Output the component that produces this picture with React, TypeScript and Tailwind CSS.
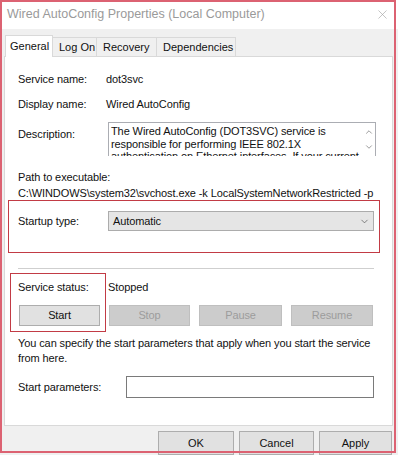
import { ChevronDown, ChevronUp, X } from "lucide-react";

const font = { fontFamily: '"Liberation Sans", Arial, sans-serif' };

function WinButton({ label, disabled, className = "" }: { label: string; disabled?: boolean; className?: string }) {
  return (
    <div
      className={`flex items-center justify-center border text-[11px] ${
        disabled
          ? "bg-[#cccccc] border-[#bfbfbf] text-[#9c9c9c]"
          : "bg-[#e1e1e1] border-[#adadad] text-[#111]"
      } ${className}`}
    >
      {label}
    </div>
  );
}

function Tab({ label, active, className = "" }: { label: string; active?: boolean; className?: string }) {
  return (
    <div
      className={`flex items-center border border-b-0 border-[#d9d9d9] text-[11px] text-[#111] ${
        active ? "bg-white h-[22px] relative z-10 -mb-px pl-[4px]" : "bg-[#f0f0f0] h-[19px] pl-[6px]"
      } ${className}`}
    >
      {label}
    </div>
  );
}

export default function App() {
  return (
    <div className="relative w-[398px] h-[455px] overflow-hidden bg-white text-[#111]" style={font}>
      {/* title bar */}
      <div className="h-[29px] flex items-center justify-between pl-[7px] pr-[8px] bg-white">
        <span className="text-[12.5px] text-[#9a9a9a]">Wired AutoConfig Properties (Local Computer)</span>
        <X className="w-[15px] h-[15px] text-[#a0a0a0]" strokeWidth={1} />
      </div>

      {/* body */}
      <div className="bg-[#f0f0f0] h-[426px] pl-[4px] pr-[5px] pt-[5px]">
        <div className="flex items-end pl-px h-[22px]">
          <Tab label="General" active className="w-[48px]" />
          <Tab label="Log On" className="w-[44px] border-l-0" />
          <Tab label="Recovery" className="w-[60px] border-l-0" />
          <Tab label="Dependencies" className="w-[79px] border-l-0" />
        </div>

        <div className="bg-white border border-[#d9d9d9] h-[370px] pl-[13px] pr-[16px] pt-[14px] text-[11px] tracking-[-0.1px]">
          <div className="flex items-center h-[16px]">
            <span className="w-[88px]">Service name:</span>
            <span>dot3svc</span>
          </div>
          <div className="flex items-center h-[16px] mt-[9px]">
            <span className="w-[88px]">Display name:</span>
            <span>Wired AutoConfig</span>
          </div>
          <div className="flex items-start h-[34px] mt-[10px]">
            <span className="w-[90px] pt-[4px] leading-[16px]">Description:</span>
            <div className="flex-1 h-[34px] border border-[#abadb3] border-b-0 flex overflow-hidden">
              <div className="flex-1 pl-[2px] pt-[2px] leading-[12.5px] overflow-hidden">
                The Wired AutoConfig (DOT3SVC) service is responsible for performing IEEE 802.1X
                authentication on Ethernet interfaces. If your current wired network deployment
                enforces 802.1X authentication, the DOT3SVC service should be configured to run.
              </div>
              <div className="w-[12px] flex flex-col items-center pt-[4px] text-[#606060]">
                <ChevronUp className="w-[10px] h-[10px]" strokeWidth={1.5} />
                <ChevronDown className="w-[10px] h-[10px] mt-[5px]" strokeWidth={1.5} />
              </div>
            </div>
          </div>
          <div className="mt-[13px] leading-[16px]">Path to executable:</div>
          <div className="leading-[16px] whitespace-nowrap">
            C:\WINDOWS\system32\svchost.exe -k LocalSystemNetworkRestricted -p
          </div>
          <div className="flex items-center h-[20px] mt-[10px] pr-[2px]">
            <span className="w-[90px]">Startup type:</span>
            <div className="flex-1 h-[20px] bg-[#e5e5e5] border border-[#acacac] flex items-center justify-between pl-[4px] pr-[3px]">
              <span>Automatic</span>
              <ChevronDown className="w-[11px] h-[11px] text-[#505050]" strokeWidth={1.5} />
            </div>
          </div>

          <div className="h-px bg-[#cfcfcf] mt-[37px] mr-[2px]" />

          <div className="flex items-center h-[16px] mt-[10px]">
            <span className="w-[90px]">Service status:</span>
            <span>Stopped</span>
          </div>
          <div className="flex h-[21px] mt-[10px] gap-[9px]">
            <WinButton label="Start" className="w-[81px] ml-px" />
            <WinButton label="Stop" disabled className="w-[81px]" />
            <WinButton label="Pause" disabled className="w-[83px]" />
            <WinButton label="Resume" disabled className="w-[82px]" />
          </div>
          <div className="mt-[10px] leading-[15px]">
            You can specify the start parameters that apply when you start the service from here.
          </div>
          <div className="flex items-center h-[22px] mt-[10px] pr-[2px]">
            <span className="w-[108px]">Start parameters:</span>
            <div className="flex-1 h-[22px] border border-[#7a7a7a] bg-white" />
          </div>
        </div>

        <div className="flex justify-end gap-[5px] mt-[5px] pr-px">
          <WinButton label="OK" className="w-[76px] h-[24px]" />
          <WinButton label="Cancel" className="w-[75px] h-[24px]" />
          <WinButton label="Apply" className="w-[73px] h-[24px]" />
        </div>
      </div>

      {/* annotation outlines */}
      <div className="absolute left-0 top-0 w-[396px] h-[453px] border-2 border-[#dc6272] pointer-events-none" />
      <div className="absolute left-[8px] top-[200px] w-[372px] h-[53px] border border-[#c23b45] pointer-events-none" />
      <div className="absolute left-[10px] top-[273px] w-[96px] h-[59px] border border-[#c23b45] pointer-events-none" />
    </div>
  );
}
